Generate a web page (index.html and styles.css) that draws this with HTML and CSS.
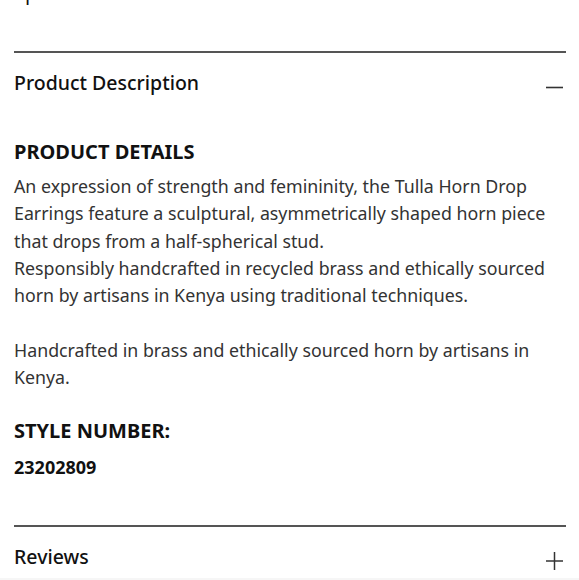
FILE: index.html
```html
<!DOCTYPE html>
<html lang="en">
<head>
<meta charset="utf-8">
<link rel="stylesheet" href="styles.css">
</head>
<body>
<div class="page">
  <div class="prev"><span class="prev-text">Sp</span></div>
  <section class="acc acc-open">
    <div class="acc-head">
      <h2 class="acc-title">Product Description</h2>
      <svg class="acc-icon" width="17" height="17" viewBox="0 0 17 17"><line x1="0" y1="8.5" x2="17" y2="8.5" stroke="#333" stroke-width="1.6"/></svg>
    </div>
    <div class="acc-body">
      <h3 class="label">PRODUCT DETAILS</h3>
      <p class="desc">An expression of strength and femininity, the Tulla Horn Drop<br>Earrings feature a sculptural, asymmetrically shaped horn piece<br>that drops from a half-spherical stud.<br>Responsibly handcrafted in recycled brass and ethically sourced<br>horn by artisans in Kenya using traditional techniques.<br><br>Handcrafted in brass and ethically sourced horn by artisans in<br>Kenya.</p>
      <h3 class="label label-style">STYLE NUMBER:</h3>
      <p class="style-no">23202809</p>
    </div>
  </section>
  <section class="acc">
    <div class="acc-head acc-head-last">
      <h2 class="acc-title">Reviews</h2>
      <svg class="acc-icon" width="17" height="18" viewBox="0 0 17 18"><line x1="0" y1="9" x2="17" y2="9" stroke="#333" stroke-width="1.5"/><line x1="8.5" y1="0" x2="8.5" y2="18" stroke="#333" stroke-width="1.5"/></svg>
    </div>
  </section>
</div>
<div class="after"></div>
</body>
</html>
```
FILE: styles.css
```css
html, body { margin: 0; padding: 0; background: #fff; }
body { font-family: "Noto Sans", "Liberation Sans", sans-serif; color: #111; }
.page { padding: 0 13px 0 14px; }
.prev { height: 51px; overflow: hidden; }
.prev-text { display: block; font-size: 20px; line-height: 20px; margin-top: -17px; color: #111; }
.acc { border-top: 2px solid #555; }
.acc-head { display: flex; justify-content: space-between; align-items: center; padding: 16px 0 16px; }
.acc-head-last { padding-bottom: 7px; }
.acc-title { margin: 0; font-size: 19.5px; font-weight: 500; line-height: 28px; color: #111; }
.acc-icon { margin-right: 3px; margin-top: 8px; }
.acc-body { padding: 25px 0 46px; }
.label { margin: 0 0 7px; font-size: 20px; font-weight: 700; line-height: 28px; color: #111; }
.label-style { margin-top: 26px; margin-bottom: 10px; }
.desc { margin: 0; font-size: 17.8px; line-height: 27.3px; color: #333; white-space: nowrap; }
.style-no { margin: 0; font-size: 18px; font-weight: 700; line-height: 24px; color: #111; }
.after { height: 2px; background: #f6f6f6; }
```
